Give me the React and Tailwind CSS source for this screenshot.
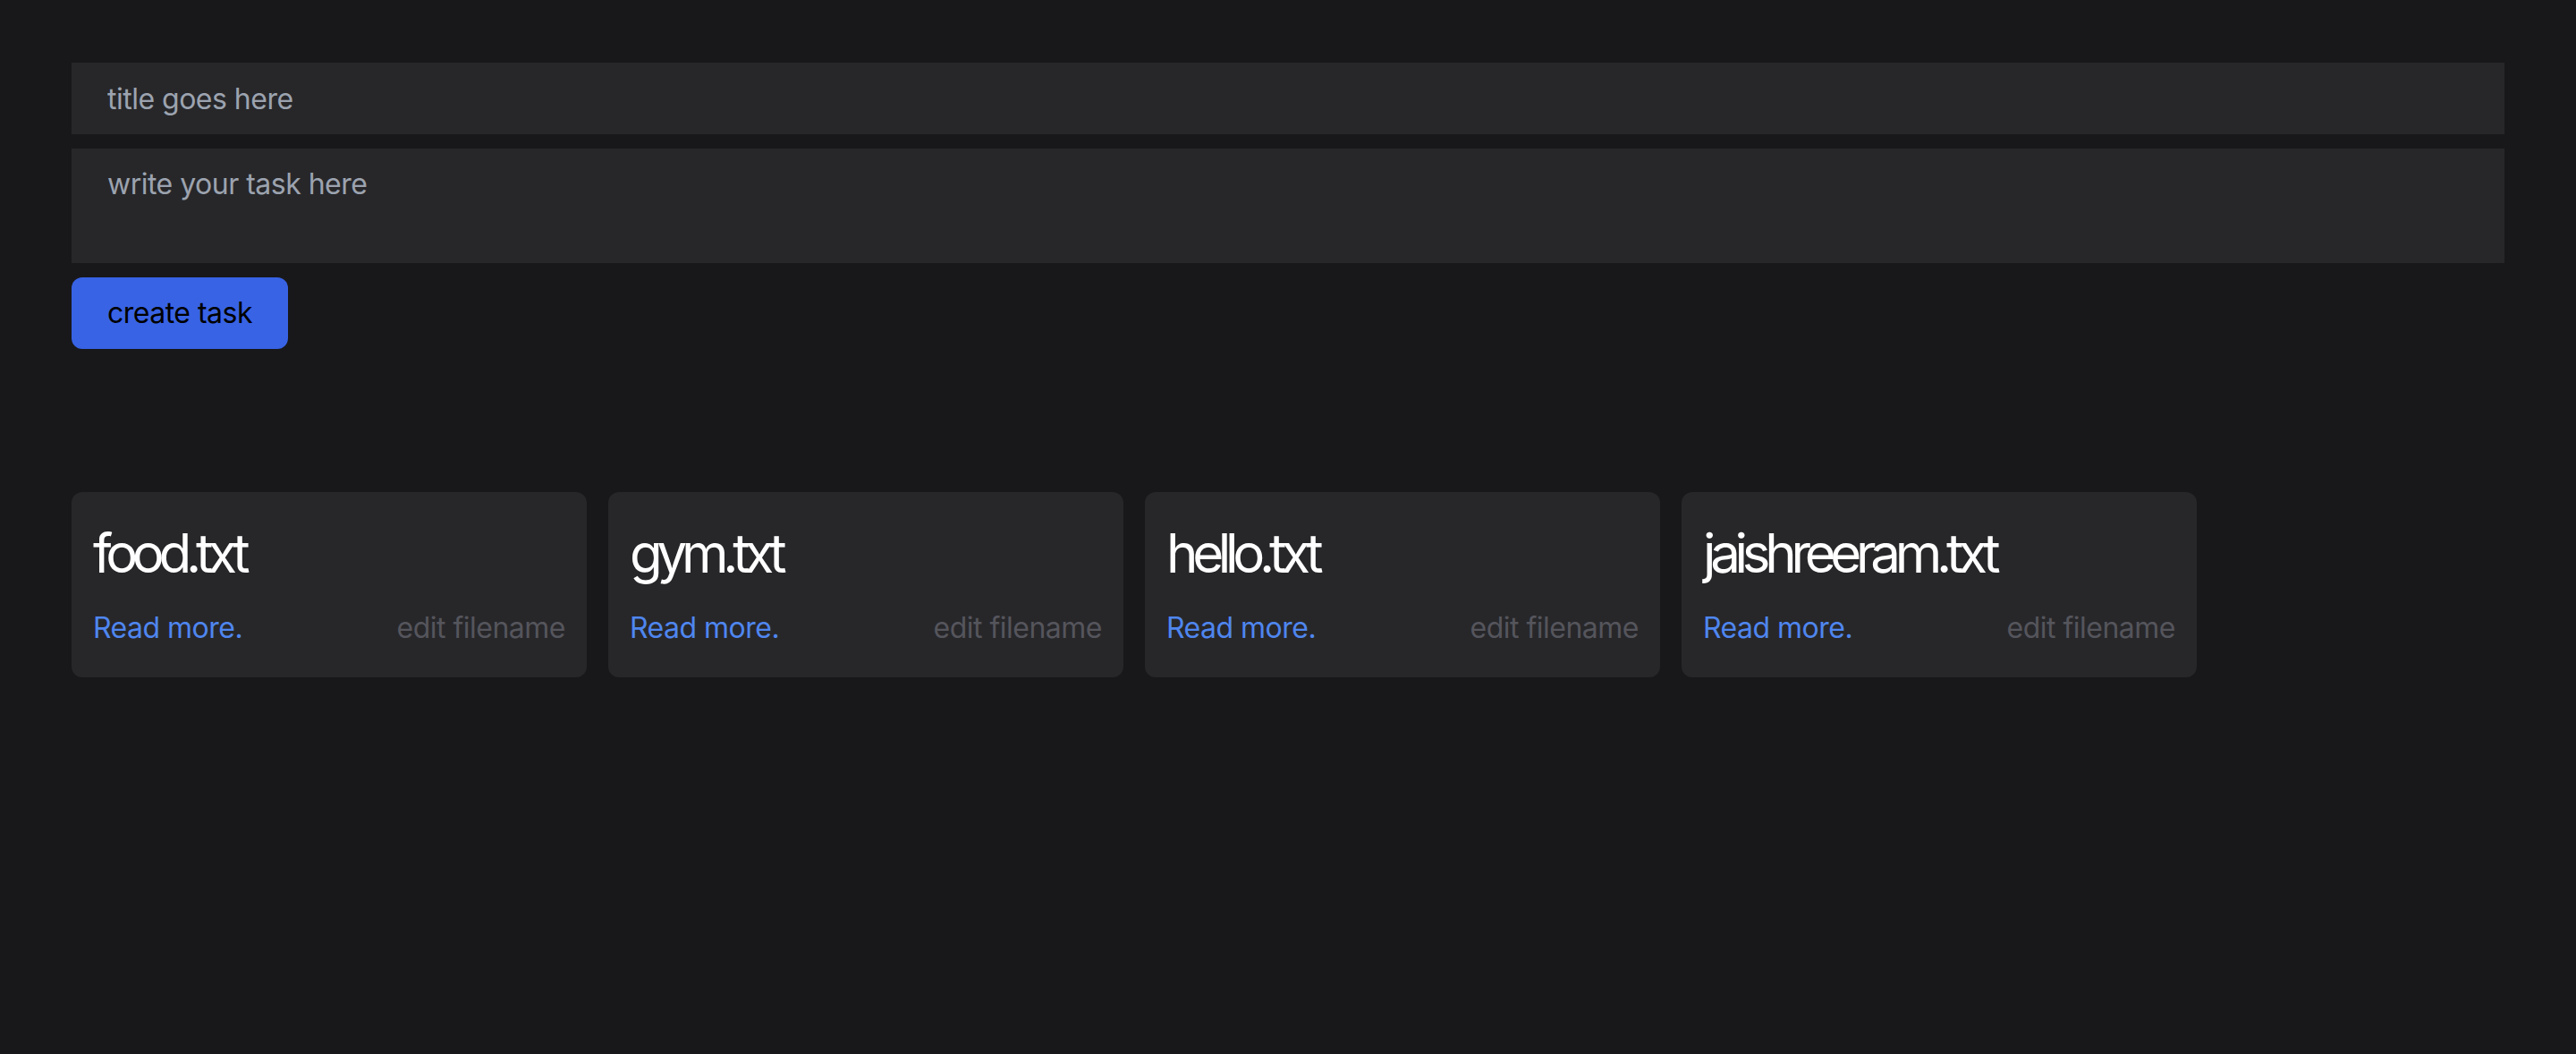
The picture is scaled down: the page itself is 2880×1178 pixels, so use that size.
import React from 'react';

const files = ['food.txt', 'gym.txt', 'hello.txt', 'jaishreeram.txt'];

function FileCard({ name }) {
  return (
    <div className="w-[576px] rounded-[12px] bg-[#27272a] px-[24px] pt-[32px] pb-[31px]">
      <h1 className="text-[60px] leading-[72px] tracking-[-0.105em] text-white">{name}</h1>
      <div className="mt-[24px] flex items-center justify-between text-[32px] leading-[48px] tracking-[-0.016em]">
        <a href="#" className="text-[#4f86ef]">Read more.</a>
        <a href="#" className="text-[#55555c]">edit filename</a>
      </div>
    </div>
  );
}

export default function App() {
  return (
    <div className="min-h-screen bg-[#18181b] px-[80px] pt-[70px] font-['Inter','Liberation_Sans',sans-serif]">
      {/* new task form */}
      <form className="flex flex-col" onSubmit={e => e.preventDefault()}>
        <input
          type="text"
          placeholder="title goes here"
          className="block h-[80px] w-full bg-[#27272a] px-[40px] text-[32px] tracking-[-0.016em] text-white outline-none placeholder:text-[#9ca3af]"
        />
        <textarea
          placeholder="write your task here"
          className="mt-[16px] block h-[128px] w-full resize-none bg-[#27272a] px-[40px] py-[16px] text-[32px] leading-[48px] tracking-[-0.016em] text-white outline-none placeholder:text-[#9ca3af]"
        />
        <div className="mt-[16px]">
          <button className="h-[80px] rounded-[12px] bg-[#3863e5] px-[40px] text-[32px] tracking-[-0.016em] text-black">
            create task
          </button>
        </div>
      </form>

      {/* saved files */}
      <div className="mt-[160px] flex gap-[24px]">
        {files.map(f => (
          <FileCard key={f} name={f} />
        ))}
      </div>
    </div>
  );
}
